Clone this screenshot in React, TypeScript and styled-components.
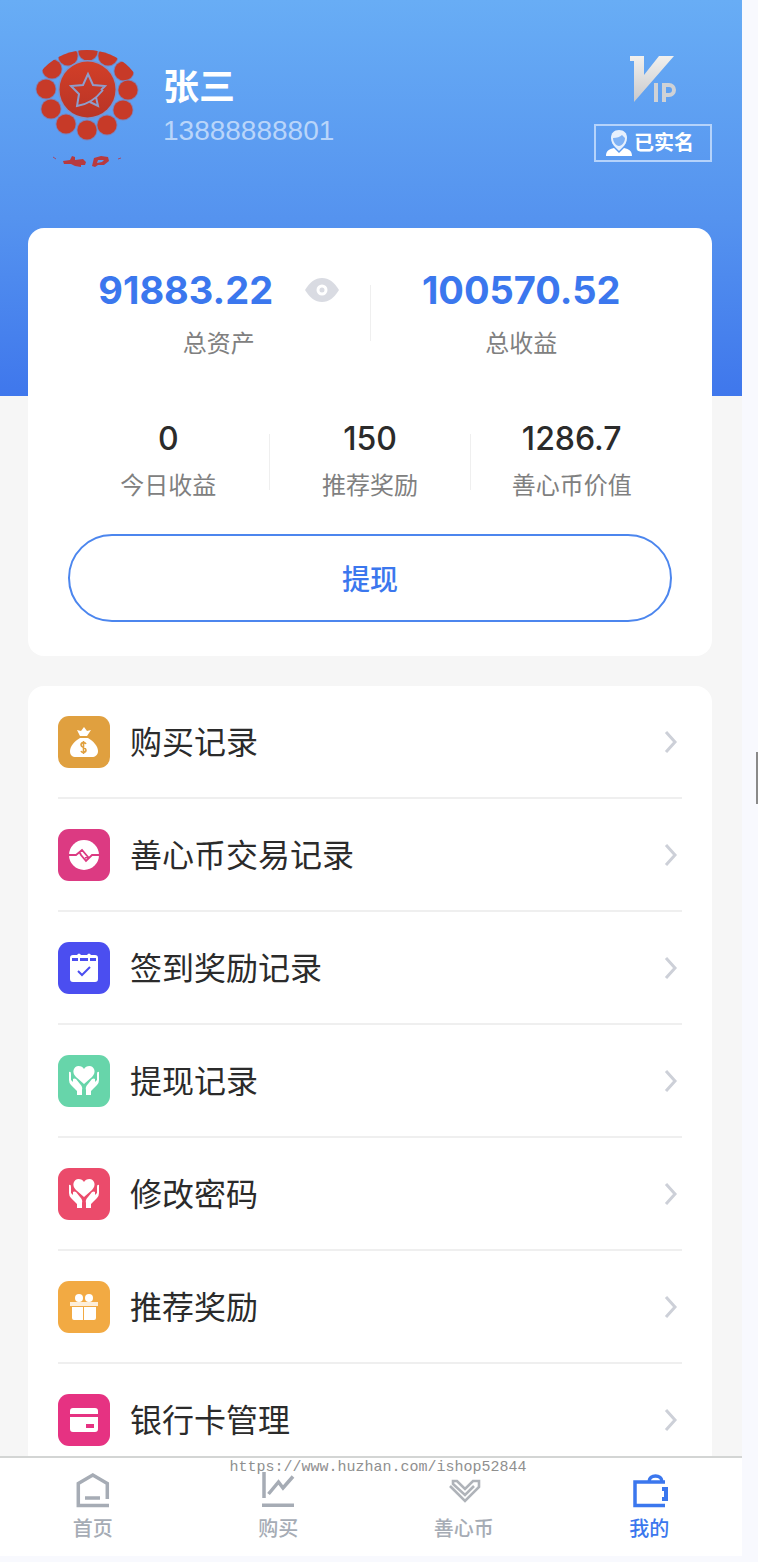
import React from 'react';
import styled, { createGlobalStyle } from 'styled-components';

const GlobalStyle = createGlobalStyle`
  * {
    box-sizing: border-box;
  }

  body {
    margin: 0;
    background: #f8f9fe;
    font-family: Inter, 'Noto Sans CJK SC', sans-serif;
    color: #2b2b2b;
  }
`;

const Screen = styled.div`
  display: flex;
  height: 100vh;
  padding-bottom: 6px;
`;

const Phone = styled.div`
  display: flex;
  flex: 1;
  flex-direction: column;
  min-width: 0;
`;

const ScrollGutter = styled.div`
  display: flex;
  flex-direction: column;
  align-items: flex-end;
  justify-content: center;
  width: 16px;
`;

const ScrollThumb = styled.div`
  width: 2px;
  height: 52px;
  background: #8a8a8a;
`;

const Content = styled.main`
  flex: 1;
  min-height: 0;
  padding: 0 30px 0 28px;
  overflow-y: auto;
  scrollbar-width: none;
  background: linear-gradient(#68adf5, #5593ef 55%, #3f77ec) 0 0 / 100% 396px no-repeat #f6f6f6;
`;

const Profile = styled.header`
  display: flex;
  align-items: flex-start;
  height: 228px;
  padding: 48px 0 0 6px;
`;

const Person = styled.div`
  flex: 1;
  padding: 13px 0 0 23px;
`;

const Name = styled.h1`
  margin: 0;
  font-size: 36px;
  line-height: 52px;
  font-weight: 700;
  color: #fff;
`;

const PhoneNumber = styled.p`
  margin: 0;
  font-family: 'Liberation Sans', sans-serif;
  font-size: 28px;
  line-height: 36px;
  color: #b9d5fa;
`;

const Badges = styled.div`
  display: flex;
  flex-direction: column;
  align-items: center;
  gap: 20px;
  padding-top: 8px;
`;

const Verified = styled.div`
  display: flex;
  align-items: center;
  gap: 1px;
  height: 38px;
  padding: 0 16px 0 9px;
  border: 2px solid #b5d3fb;
  font-size: 20px;
  line-height: 28px;
  font-weight: 700;
  color: #fff;
`;

const Card = styled.section`
  padding: 38px 40px 34px;
  border-radius: 16px;
  background: #fff;
`;

const Stats = styled.div<{ $gap: number }>`
  display: flex;
  align-items: center;
  margin-bottom: ${({ $gap }) => $gap}px;
`;

const Stat = styled.div`
  display: flex;
  flex: 1;
  flex-direction: column;
  align-items: center;
  min-width: 0;
`;

const Divider = styled.div`
  width: 1px;
  height: 56px;
  background: #efefef;
`;

const Total = styled.div`
  display: flex;
  align-items: center;
  gap: 32px;
  font-size: 38px;
  line-height: 48px;
  font-weight: 700;
  color: #3b77ee;
`;

const Amount = styled.div`
  font-size: 32px;
  line-height: 34px;
  font-weight: 500;
`;

const StatLabel = styled.div`
  margin-top: 14px;
  font-size: 24px;
  line-height: 32px;
  color: #808080;
`;

const EyeButton = styled.button`
  display: flex;
  padding: 0;
  border: 0;
  background: none;
`;

const WithdrawButton = styled.button`
  display: block;
  width: 100%;
  height: 88px;
  border: 2px solid #4c86ee;
  border-radius: 44px;
  background: #fff;
  font-family: inherit;
  font-size: 28px;
  font-weight: 500;
  color: #3b77ee;
`;

const Menu = styled.nav`
  margin-top: 30px;
  padding: 0 30px;
  border-radius: 16px 16px 0 0;
  background: #fff;
`;

const MenuRow = styled.a`
  display: flex;
  align-items: center;
  height: 113px;
  padding-right: 4px;
  border-bottom: 2px solid #efefef;
  font-size: 32px;
  line-height: 48px;
  color: #2b2b2b;
  text-decoration: none;
`;

const MenuIcon = styled.span<{ $color: string }>`
  display: flex;
  align-items: center;
  justify-content: center;
  width: 52px;
  height: 52px;
  margin-right: 20px;
  border-radius: 11px;
  background: ${({ $color }) => $color};
`;

const MenuText = styled.span`
  flex: 1;
  padding-top: 2px;
`;

const TabBar = styled.nav`
  position: relative;
  display: flex;
  height: 100px;
  border-top: 2px solid #d3d5d4;
  background: #fff;
`;

const Tab = styled.a<{ $active?: boolean }>`
  display: flex;
  flex: 1;
  flex-direction: column;
  align-items: center;
  gap: 5px;
  padding-top: 14px;
  font-size: 20px;
  line-height: 32px;
  font-weight: 500;
  color: ${({ $active }) => ($active ? '#3b77ee' : '#a6acb5')};
  text-decoration: none;
`;

const Watermark = styled.div`
  position: absolute;
  top: -2px;
  left: 0;
  right: 0;
  padding-left: 14px;
  text-align: center;
  font-family: 'Liberation Mono', monospace;
  font-size: 15px;
  line-height: 24px;
  color: #8f8f8f;
  pointer-events: none;
`;

const beads = [
  [54, 3], [34, 8], [74, 8], [18, 21], [90, 23], [12, 41],
  [94, 42], [17, 61], [89, 62], [32, 76], [73, 77], [53, 82],
];

const Avatar = () => (
  <svg width="106" height="124" viewBox="0 0 106 124" role="img" aria-label="头像">
    <defs>
      <linearGradient id="red" x1="0" y1="0" x2="0" y2="1">
        <stop offset="0" stopColor="#d23f28" />
        <stop offset="1" stopColor="#b93426" />
      </linearGradient>
      <clipPath id="round">
        <circle cx="53" cy="62" r="60" />
      </clipPath>
    </defs>
    <g clipPath="url(#round)">
      {beads.map(([cx, cy]) => (
        <g key={`${cx}-${cy}`}>
          <circle cx={cx} cy={cy} r="10.5" fill="#7d82b8" />
          <circle cx={cx} cy={cy} r="9.6" fill="#c73a28" />
        </g>
      ))}
    </g>
    <circle cx="53.5" cy="41.5" r="29.5" fill="#7b93cf" />
    <circle cx="53.5" cy="41.5" r="28" fill="url(#red)" />
    <path
      d="M67 42l4-4-12-1-5-11-5 11-12 1 8 8-2 12c8-1 18-6 26-16M56 54l8 4-2-9"
      fill="none"
      stroke="#8f9dcb"
      strokeWidth="2"
    />
    <path d="M19 109l3 2M84 111l3-1" stroke="#a4486a" strokeWidth="1" />
    <path
      d="M29 113l7-1 2-4 3 1v3l8-1 3 3-1 3-4 0 0 2-6-1-4-2-7 0z"
      fill="#b83a3e"
    />
    <path
      d="M58 118l2-8 7-2 7 1 1 4-5 4-6 0-3 2zM64 112l-1 3 5-1 2-2z"
      fill="#b83a3e"
      fillRule="evenodd"
    />
  </svg>
);

const VipIcon = () => (
  <svg width="48" height="48" viewBox="0 0 48 48" role="img" aria-label="VIP">
    <defs>
      <linearGradient id="silver" x1="0" y1="0" x2="0" y2="1">
        <stop offset="0" stopColor="#f1f0ee" />
        <stop offset="1" stopColor="#c9c9cb" />
      </linearGradient>
    </defs>
    <path d="M1 0h14v19L30 0h15L5 46V5H1z" fill="url(#silver)" />
    <path d="M27 27v19M35 46V29h5a5 5 0 0 1 0 10h-5" fill="none" stroke="#cfd2d6" strokeWidth="4" />
  </svg>
);

const PersonIcon = () => (
  <svg width="28" height="28" viewBox="0 0 28 28" fill="#fff">
    <path d="M14 1c5 0 8 3 8 8 0 4-2 7-4 9l-4 4-4-4c-2-2-4-5-4-9 0-5 3-8 8-8z" opacity="0.85" />
    <path d="M8 9c4 0 7-1 9-3l3 3c0 4-3 8-6 8s-6-4-6-8z" fill="#7fb2f5" />
    <path d="M1 27c0-5 3-7 8-8l5 5 5-5c5 1 8 3 8 8z" />
  </svg>
);

const EyeIcon = () => (
  <svg width="34" height="26" viewBox="0 0 34 26">
    <path d="M0 13C5 5 10 1 17 1s12 4 17 12c-5 8-10 12-17 12S5 21 0 13z" fill="#d9dbe2" />
    <circle cx="17" cy="13" r="4" fill="none" stroke="#fff" strokeWidth="3" />
  </svg>
);

const Chevron = () => (
  <svg width="14" height="22" viewBox="0 0 14 22" fill="none" stroke="#cdd0d8" strokeWidth="3">
    <path d="M2 1l9 10-9 10" />
  </svg>
);

const BagIcon = () => (
  <svg width="30" height="32" viewBox="0 0 30 32" fill="#fff">
    <path d="M11 10L8 4l4 1 3-4 3 4 4-1-4 6z" />
    <path d="M11 12h8c5 3 10 8 10 13 0 4-3 6-6 6H7c-4 0-6-2-6-6 0-5 5-10 10-13z" />
    <path
      d="M17 18c-1-2-5-2-5 1s5 2 5 5-4 3-5 1M14.5 15v13"
      fill="none"
      stroke="#e0a03f"
      strokeWidth="1.6"
    />
  </svg>
);

const TradeIcon = () => (
  <svg width="30" height="30" viewBox="0 0 30 30">
    <circle cx="15" cy="15" r="15" fill="#fff" />
    <path
      d="M0 15h7l6-5 6 7-3 1M11 13l1 2 5 6 6-6h7"
      fill="none"
      stroke="#dc3a82"
      strokeWidth="1.8"
    />
  </svg>
);

const CalendarIcon = () => (
  <svg width="30" height="30" viewBox="0 0 30 30">
    <path d="M4 2h4q2-3 4 0h6q2-3 4 0h4q3 0 3 3v21q0 3-3 3H4q-3 0-3-3V5q0-3 3-3z" fill="#fff" />
    <path d="M3 5h6v3H3zM11 5h8v3h-8zM21 5h6v3h-6z" fill="#4b4ef0" />
    <path d="M9 18l4 4 8-8" fill="none" stroke="#4b4ef0" strokeWidth="2" />
  </svg>
);

const HandsIcon = () => (
  <svg width="30" height="30" viewBox="0 0 30 30" fill="#fff">
    <path d="M15 18L7 11C2 6 5 0 9.500 0 12 0 14 1 15 3c1-2 3-3 5.500-3C25 0 28 6 23 11z" />
    <path d="M0 6q2-1 2 2v6l2 2 0-3q1-1 3 0l4 5q3 3 2 6v5H8v-4l-6-6q-2-2-2-5z" />
    <path d="M30 6q-2-1-2 2v6l-2 2 0-3q-1-1-3 0l-4 5q-3 3-2 6v5h5v-4l6-6q2-2 2-5z" />
  </svg>
);

const GiftIcon = () => (
  <svg width="28" height="28" viewBox="0 0 28 28" fill="#fff">
    <circle cx="9" cy="5" r="4" />
    <circle cx="19" cy="5" r="4" />
    <path d="M0 9h28v4H0z" opacity="0.8" />
    <path d="M2 14h11v13H4q-2 0-2-2zM14 14h12v11q0 2-2 2H14z" />
  </svg>
);

const CardIcon = () => (
  <svg width="28" height="24" viewBox="0 0 28 24" fill="#fff">
    <path d="M3 0h22q3 0 3 3v3H0V3q0-3 3-3zM0 9h28v12q0 3-3 3H3q-3 0-3-3z" />
    <path d="M16 16h8v4h-8z" fill="#e63282" />
  </svg>
);

const HomeIcon = () => (
  <svg width="36" height="36" viewBox="0 0 36 36" fill="none" stroke="currentColor" strokeWidth="3.5">
    <path d="M32.3 27V11.5L17.8 3 3.3 11.5v22H34M10 26h15" />
  </svg>
);

const ChartIcon = () => (
  <svg width="36" height="36" viewBox="0 0 36 36" fill="none" stroke="currentColor" strokeWidth="3.5">
    <path d="M4 0v26M2 33.3h32M8.500 22l10-12 4.500 6L33 4.500" />
  </svg>
);

const HeartIcon = () => (
  <svg width="36" height="36" viewBox="0 0 36 36" fill="none" stroke="#afb3b9" strokeWidth="2.6">
    <path d="M4 14l15 15 14-14V9h-6l-8 8-8-8H7v3l12 11 9-9" />
  </svg>
);

const WalletIcon = () => (
  <svg width="40" height="36" viewBox="0 0 40 36" fill="none" stroke="currentColor" strokeWidth="3.5">
    <path d="M36 10H6v23.5h30M20 9.500c0-7.500 13-7.500 13 0" />
    <path d="M33 15h6v14h-6v-4h2v-6h-2z" fill="currentColor" stroke="none" />
  </svg>
);

const menu = [
  { text: '购买记录', color: '#e0a03f', icon: <BagIcon /> },
  { text: '善心币交易记录', color: '#dc3a82', icon: <TradeIcon /> },
  { text: '签到奖励记录', color: '#4b4ef0', icon: <CalendarIcon /> },
  { text: '提现记录', color: '#67d5aa', icon: <HandsIcon /> },
  { text: '修改密码', color: '#eb4b6b', icon: <HandsIcon /> },
  { text: '推荐奖励', color: '#f2aa43', icon: <GiftIcon /> },
  { text: '银行卡管理', color: '#e63282', icon: <CardIcon /> },
];

const tabs = [
  { text: '首页', icon: <HomeIcon /> },
  { text: '购买', icon: <ChartIcon /> },
  { text: '善心币', icon: <HeartIcon /> },
  { text: '我的', icon: <WalletIcon />, active: true },
];

const App = () => (
  <Screen>
    <GlobalStyle />
    <Phone>
      <Content>
        <Profile>
          <Avatar />
          <Person>
            <Name>张三</Name>
            <PhoneNumber>13888888801</PhoneNumber>
          </Person>
          <Badges>
            <VipIcon />
            <Verified>
              <PersonIcon />
              已实名
            </Verified>
          </Badges>
        </Profile>
        <Card>
          <Stats $gap={62}>
            <Stat>
              <Total>
                91883.22
                <EyeButton aria-label="显示金额">
                  <EyeIcon />
                </EyeButton>
              </Total>
              <StatLabel>总资产</StatLabel>
            </Stat>
            <Divider />
            <Stat>
              <Total>100570.52</Total>
              <StatLabel>总收益</StatLabel>
            </Stat>
          </Stats>
          <Stats $gap={32}>
            <Stat>
              <Amount>0</Amount>
              <StatLabel>今日收益</StatLabel>
            </Stat>
            <Divider />
            <Stat>
              <Amount>150</Amount>
              <StatLabel>推荐奖励</StatLabel>
            </Stat>
            <Divider />
            <Stat>
              <Amount>1286.7</Amount>
              <StatLabel>善心币价值</StatLabel>
            </Stat>
          </Stats>
          <WithdrawButton>提现</WithdrawButton>
        </Card>
        <Menu>
          {menu.map(({ text, color, icon }) => (
            <MenuRow key={text} href="#">
              <MenuIcon $color={color}>{icon}</MenuIcon>
              <MenuText>{text}</MenuText>
              <Chevron />
            </MenuRow>
          ))}
        </Menu>
      </Content>
      <TabBar>
        {tabs.map(({ text, icon, active }) => (
          <Tab key={text} href="#" $active={active}>
            {icon}
            {text}
          </Tab>
        ))}
        <Watermark>https://www.huzhan.com/ishop52844</Watermark>
      </TabBar>
    </Phone>
    <ScrollGutter>
      <ScrollThumb />
    </ScrollGutter>
  </Screen>
);

export default App;
